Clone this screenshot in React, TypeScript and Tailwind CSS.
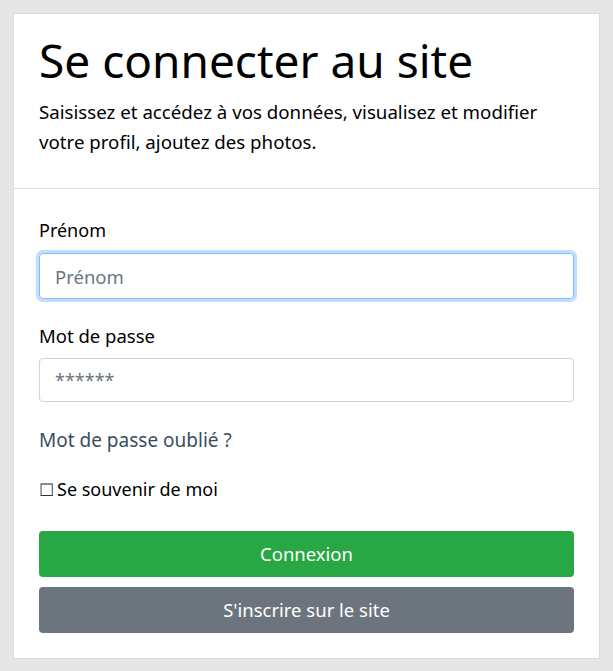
export default function App() {
  return (
    <div
      className="min-h-[671px] bg-[#e6e6e6] pt-[13px] px-[13px] pb-[13px]"
      style={{ fontFamily: '"Noto Sans", "Open Sans", sans-serif' }}
    >
      <div className="w-[587px] bg-white border border-[#dcdcdc] text-black">
        <div className="px-[25px] pt-[17px] pb-[31px] border-b border-[#dedede]">
          <h1 className="text-[46px] leading-[58px] font-normal">Se connecter au site</h1>
          <p className="mt-[8px] text-[18.7px] leading-[30px]">
            Saisissez et accédez à vos données, visualisez et modifier votre profil,
            ajoutez des photos.
          </p>
        </div>
        <form className="px-[25px] pt-[28px] pb-[25px]" onSubmit={(e) => e.preventDefault()}>
          <label className="block text-[18px] leading-[27px] mb-[9px]">Prénom</label>
          <input
            autoFocus
            placeholder="Prénom"
            className="block w-full h-[46px] px-[15px] text-[18.5px] rounded-[4px] border border-[#80bdff] outline-none shadow-[0_0_0_3px_rgba(0,123,255,0.25)] placeholder:text-[#6c757d]"
          />
          <label className="block text-[18.5px] leading-[27px] mt-[23px] mb-[9px]">
            Mot de passe
          </label>
          <input
            type="password"
            placeholder="******"
            className="block w-full h-[44px] px-[15px] text-[18px] rounded-[4px] border border-[#ced4da] outline-none placeholder:text-[#6c757d]"
          />
          <a href="#" className="block mt-[25px] text-[19px] leading-[27px] text-[#3a4d63]">
            Mot de passe oublié ?
          </a>
          <div className="mt-[22px] flex items-center text-[18px] leading-[27px]">
            <span className="mr-[3px] text-[17px] text-[#333]">☐</span>
            <span>Se souvenir de moi</span>
          </div>
          <button className="mt-[28px] block w-full h-[46px] rounded-[4px] bg-[#28a745] text-white text-[18.5px]">
            Connexion
          </button>
          <button className="mt-[10px] block w-full h-[46px] rounded-[4px] bg-[#6c757d] text-white text-[18.5px]">
            S'inscrire sur le site
          </button>
        </form>
      </div>
    </div>
  );
}
